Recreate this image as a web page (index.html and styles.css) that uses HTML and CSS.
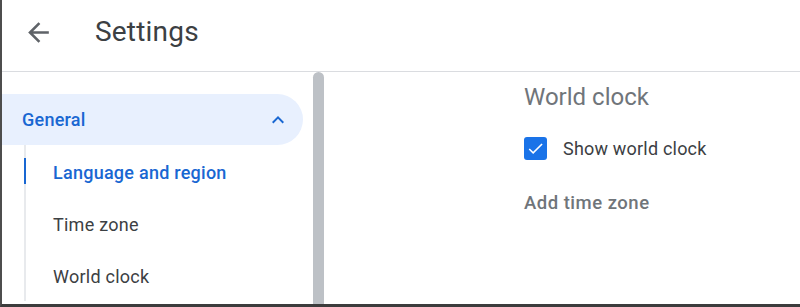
FILE: index.html
```html
<!DOCTYPE html>
<html>
<head lang="en">
    <meta charset="UTF-8">
    <title>Settings</title>
    <link rel="stylesheet" href="styles.css">
</head>
<body>
<div class="frame">
    <div class="header">
        <a class="back" href="#">
            <svg width="31" height="31" viewBox="0 0 24 24"><path d="M20 11H7.83l5.59-5.59L12 4l-8 8 8 8 1.41-1.41L7.83 13H20v-2z" fill="#5f6368"/></svg>
        </a>
        <h1 class="title">Settings</h1>
    </div>
    <div class="main">
        <div class="sidebar">
            <div class="group">
                <span>General</span>
                <svg width="24" height="24" viewBox="0 0 24 24"><path d="M12 8l-6 6 1.41 1.41L12 10.83l4.59 4.58L18 14z" fill="#1967d2"/></svg>
            </div>
            <ul class="sub">
                <li class="active">Language and region</li>
                <li>Time zone</li>
                <li>World clock</li>
            </ul>
        </div>
        <div class="scroll"></div>
        <div class="content">
            <h2 class="section">World clock</h2>
            <label class="check_row">
                <span class="box">
                    <svg width="19" height="19" viewBox="0 0 24 24"><path d="M9 16.2L4.8 12l-1.4 1.4L9 19 21 7l-1.4-1.4L9 16.2z" fill="#fff"/></svg>
                </span>
                Show world clock
            </label>
            <div class="add">Add time zone</div>
        </div>
    </div>
</div>
</body>
</html>
```

FILE: styles.css
```css
html, body {
    margin: 0;
    padding: 0;
}
body {
    font-family: Roboto, "Liberation Sans", sans-serif;
    color: #3c4043;
    background: #fff;
}
.frame {
    height: 307px;
    box-sizing: border-box;
    border-left: 2px solid #4d4d4d;
    border-bottom: 3px solid #3c3c3c;
    overflow: hidden;
}
.header {
    height: 63px;
    padding-bottom: 8px;
    border-bottom: 1px solid #dadce0;
    display: flex;
    align-items: center;
}
.back {
    display: flex;
    margin-left: 21px;
    margin-top: 2px;
}
.title {
    margin: 0 0 0 41px;
    font-size: 28px;
    font-weight: 400;
    color: #3c4043;
    letter-spacing: 0.2px;
}
.main {
    display: flex;
    height: 232px;
}
.sidebar {
    width: 311px;
    padding-top: 22px;
}
.group {
    height: 51px;
    margin-right: 10px;
    padding: 0 13px 0 20px;
    background: #e8f0fe;
    border-radius: 0 26px 26px 0;
    display: flex;
    align-items: center;
    justify-content: space-between;
    font-size: 18px;
    letter-spacing: 0.25px;
    font-weight: 500;
    color: #1967d2;
}
.sub {
    list-style: none;
    margin: 13px 0 0 22px;
    padding: 0;
    border-left: 2px solid #e8eaed;
}
.sub li {
    position: relative;
    height: 50px;
    padding-top: 2px;
    line-height: 52px;
    padding-left: 27px;
    font-size: 18px;
    letter-spacing: 0.25px;
}
.sub li:first-child {
    margin-top: -13px;
}
.sub li.active {
    color: #1967d2;
    font-weight: 500;
}
.sub li.active::before {
    content: "";
    position: absolute;
    left: -2px;
    top: 13px;
    width: 2px;
    height: 26px;
    background: #1967d2;
}
.scroll {
    width: 11px;
    background: #bdc1c6;
    border-radius: 6px 6px 0 0;
}
.content {
    flex: 1;
    padding: 11px 0 0 200px;
}
.section {
    margin: 0;
    font-size: 24px;
    line-height: 28px;
    font-weight: 400;
    color: #70757a;
}
.check_row {
    display: flex;
    align-items: center;
    gap: 16px;
    height: 28px;
    margin-top: 23px;
    font-size: 18px;
    letter-spacing: 0.2px;
}
.box {
    width: 23px;
    height: 23px;
    border-radius: 3px;
    background: #1a73e8;
    display: flex;
    align-items: center;
    justify-content: center;
}
.add {
    margin-top: 29px;
    line-height: 24px;
    font-size: 18.5px;
    letter-spacing: 0.5px;
    font-weight: 500;
    color: #70757a;
}
```
